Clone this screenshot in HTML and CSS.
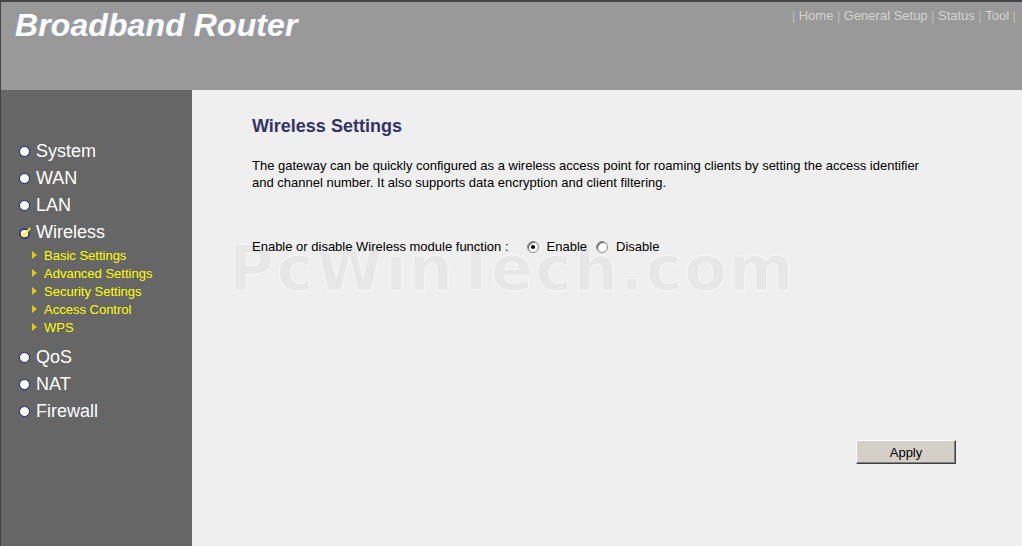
FILE: index.html
```html
<!DOCTYPE html>
<html>
<head>
<meta charset="utf-8">
<link rel="stylesheet" href="styles.css">
</head>
<body>
<div class="page">
  <header class="header">
    <h1 class="brand">Broadband Router</h1>
    <nav class="topnav">
      <span class="sep">|</span><a>Home</a><span class="sep">|</span><a>General Setup</a><span class="sep">|</span><a>Status</a><span class="sep">|</span><a>Tool</a><span class="sep">|</span>
    </nav>
  </header>
  <div class="main">
    <aside class="sidebar">
      <ul class="menu">
        <li class="item"><span class="dot"></span>System</li>
        <li class="item"><span class="dot"></span>WAN</li>
        <li class="item"><span class="dot"></span>LAN</li>
        <li class="item active">
          <svg class="check" width="12" height="12" viewBox="0 0 12 12"><circle cx="5.5" cy="6.5" r="4.5" fill="#fff" stroke="#1a1a80" stroke-width="1.3"/><path d="M2.5 6.5 L5 9.5 L11 1" fill="none" stroke="#ffff00" stroke-width="1.8"/></svg>Wireless
        </li>
        <li class="sub">
          <ul class="submenu">
            <li><span class="tri"></span>Basic Settings</li>
            <li><span class="tri"></span>Advanced Settings</li>
            <li><span class="tri"></span>Security Settings</li>
            <li><span class="tri"></span>Access Control</li>
            <li><span class="tri"></span>WPS</li>
          </ul>
        </li>
        <li class="item"><span class="dot"></span>QoS</li>
        <li class="item"><span class="dot"></span>NAT</li>
        <li class="item"><span class="dot"></span>Firewall</li>
      </ul>
    </aside>
    <section class="content">
      <div class="watermark">PcWinTech.com</div>
      <h2 class="title">Wireless Settings</h2>
      <p class="desc">The gateway can be quickly configured as a wireless access point for roaming clients by setting the access identifier and channel number. It also supports data encryption and client filtering.</p>
      <div class="formrow">
        <span class="label">Enable or disable Wireless module function :</span>
        <span class="radio on"></span><span class="opt">Enable</span>
        <span class="radio"></span><span class="opt">Disable</span>
      </div>
      <div class="actions"><button class="btn">Apply</button></div>
    </section>
  </div>
</div>
</body>
</html>
```

FILE: styles.css
```css
* { box-sizing: border-box; }
html, body { margin: 0; padding: 0; }
body { font-family: "Liberation Sans", Arial, sans-serif; background: #efefef; }
.page { width: 1022px; height: 546px; overflow: hidden; display: flex; flex-direction: column; border-left: 1px solid #444; }
.header { height: 90px; background: #999999; border-top: 2px solid #444; display: flex; justify-content: space-between; align-items: flex-start; }
.brand { margin: 5px 0 0 14px; font-size: 32px; font-style: italic; font-weight: bold; color: #fff; text-shadow: -1px 0 0 rgba(140,170,255,0.6); letter-spacing: 0.1px; }
.topnav { margin-top: 6px; margin-right: 6px; font-size: 13px; color: #d8d8d8; display: flex; gap: 3.5px; }
.topnav a { color: #d4d4d4; }
.topnav .sep { color: #bdbdbd; }
.main { flex: 1; display: flex; }
.sidebar { width: 191px; background: #666666; padding-top: 48px; }
.menu, .submenu { list-style: none; margin: 0; padding: 0; }
.item { height: 27px; display: flex; align-items: center; padding-left: 18px; font-size: 18px; color: #fff; }
.dot { width: 11px; height: 11px; border-radius: 50%; background: #fff; border: 1.5px solid #1a1a80; margin-right: 6px; box-sizing: border-box; }
.check { margin-right: 5px; }
.submenu { padding: 0 0 8px 31px; }
.submenu li { height: 18px; display: flex; align-items: center; font-size: 13px; color: #ffff00; }
.tri { width: 0; height: 0; border-left: 5px solid #e8c800; border-top: 4px solid transparent; border-bottom: 4px solid transparent; margin-right: 7px; }
.content { flex: 1; position: relative; padding: 26px 0 0 60px; background: #efefef; }
.title { margin: 0; font-size: 18px; font-weight: bold; color: #333366; position: relative; z-index: 1; }
.desc { margin: 20px 0 0 0; width: 680px; font-size: 13px; line-height: 17px; color: #000; position: relative; z-index: 1; }
.formrow { margin-top: 47px; display: flex; align-items: center; font-size: 13px; color: #000; height: 17px; position: relative; z-index: 1; }
.label { margin-right: 18px; }
.radio { width: 12px; height: 12px; border-radius: 50%; background: #fff; border: 1px solid #888; box-shadow: inset 1px 1px 0 #555; margin-right: 8px; position: relative; }
.radio.on::after { content: ""; position: absolute; left: 3px; top: 3px; width: 4px; height: 4px; border-radius: 50%; background: #000; }
.opt { margin-right: 9px; }
.actions { margin-top: 185px; padding-left: 604px; }
.btn { width: 100px; height: 24px; background: #d4d0c8; border: 1px solid; border-color: #fff #404040 #404040 #fff; box-shadow: inset -1px -1px 0 #808080; font-family: "Liberation Sans", Arial, sans-serif; font-size: 13px; color: #000; padding: 0; }
.watermark { position: absolute; z-index: 0; left: 37px; top: 156px; font-family: "DejaVu Sans", Verdana, sans-serif; font-size: 62px; line-height: 46px; font-weight: bold; color: #e7e7e7; -webkit-text-stroke: 1px #f6f6f6; letter-spacing: 2px; pointer-events: none; }
```
